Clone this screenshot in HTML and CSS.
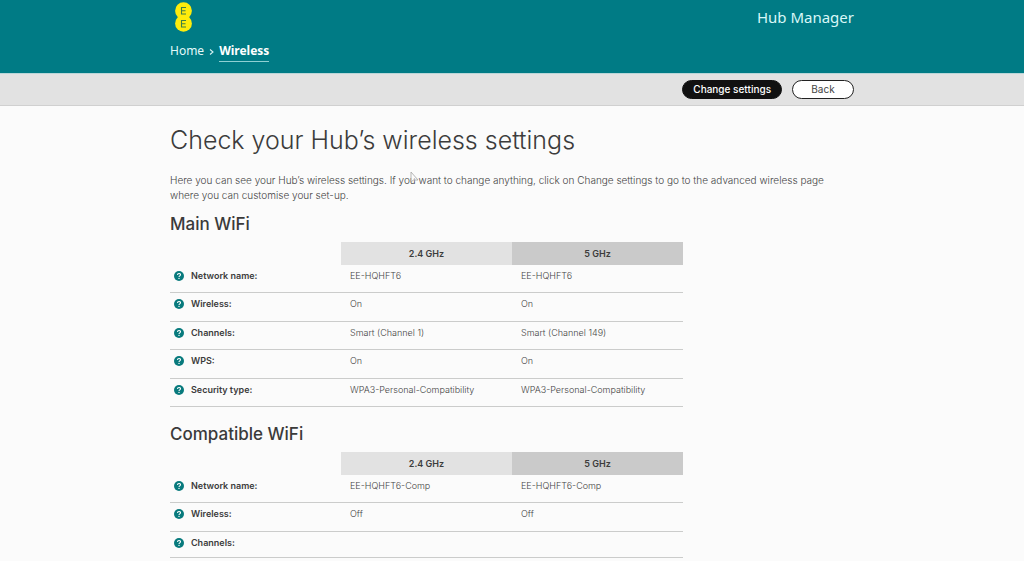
FILE: index.html
```html
<!DOCTYPE html>
<html lang="en">
<head>
<meta charset="utf-8">
<meta name="viewport" content="width=device-width, initial-scale=1">
<title>Hub Manager - Wireless</title>
<link rel="stylesheet" href="styles.css">
</head>
<body>
<svg class="defs" aria-hidden="true">
  <symbol id="help" viewBox="0 0 20 20">
    <circle cx="10" cy="10" r="10" fill="#087a7d"/>
    <path d="M7 7.8C7 4 13 4 13 7.6C13 9.8 10 9.6 10 12" fill="none" stroke="#fff" stroke-width="2.2"/>
    <circle cx="10" cy="14.8" r="1.4" fill="#fff"/>
  </symbol>
</svg>
<header class="masthead">
  <div class="container masthead-inner">
    <div class="brand">
      <a class="logo" href="#" aria-label="EE home">
        <svg viewBox="0 0 17 30" width="17" height="30">
          <circle cx="8.5" cy="8.7" r="8.4" fill="#fdec0c"/>
          <circle cx="8.5" cy="21.4" r="8.4" fill="#fdec0c"/>
          <path d="M11 5.5H6.5V12H11M6.5 8.7H10.5M11 18.5H6.5V25H11M6.5 21.7H10.5" fill="none" stroke="#3f7f45" stroke-width="1.1"/>
        </svg>
      </a>
      <nav class="crumbs" aria-label="Breadcrumb">
        <a href="#">Home</a>
        <svg class="chevron" viewBox="0 0 5 6" width="5" height="6"><path d="M1 .5L4 3L1 5.5" fill="none" stroke="#d6f2f2" stroke-width="1.1"/></svg>
        <a class="current" href="#" aria-current="page">Wireless</a>
      </nav>
    </div>
    <div class="product">Hub Manager</div>
  </div>
</header>
<div class="toolbar">
  <div class="container actions">
    <button class="btn btn-primary" type="button">Change settings</button>
    <button class="btn" type="button">Back</button>
  </div>
</div>
<main class="container content">
  <h1>Check your Hub’s wireless settings</h1>
  <p class="intro">Here you can see your Hub’s wireless settings. If you want to change anything, click on Change settings to go to the advanced wireless page where you can customise your set-up.</p>
  <svg class="pointer" viewBox="0 0 9 13" width="9" height="13" aria-hidden="true"><path d="M1 1V11L3.5 9L8 9Z" fill="#fbfbfb" fill-opacity=".5" stroke="#a5a5a5" stroke-width=".8"/></svg>

  <section>
    <h2>Main WiFi</h2>
    <table class="settings">
      <thead>
        <tr><td></td><th class="band" scope="col">2.4 GHz</th><th class="band band-5" scope="col">5 GHz</th></tr>
      </thead>
      <tbody>
        <tr><th scope="row"><svg class="help"><use href="#help"/></svg>Network name:</th><td>EE-HQHFT6</td><td>EE-HQHFT6</td></tr>
        <tr><th scope="row"><svg class="help"><use href="#help"/></svg>Wireless:</th><td>On</td><td>On</td></tr>
        <tr><th scope="row"><svg class="help"><use href="#help"/></svg>Channels:</th><td>Smart (Channel 1)</td><td>Smart (Channel 149)</td></tr>
        <tr><th scope="row"><svg class="help"><use href="#help"/></svg>WPS:</th><td>On</td><td>On</td></tr>
        <tr><th scope="row"><svg class="help"><use href="#help"/></svg>Security type:</th><td>WPA3-Personal-Compatibility</td><td>WPA3-Personal-Compatibility</td></tr>
      </tbody>
    </table>
  </section>

  <section>
    <h2>Compatible WiFi</h2>
    <table class="settings">
      <thead>
        <tr><td></td><th class="band" scope="col">2.4 GHz</th><th class="band band-5" scope="col">5 GHz</th></tr>
      </thead>
      <tbody>
        <tr><th scope="row"><svg class="help"><use href="#help"/></svg>Network name:</th><td>EE-HQHFT6-Comp</td><td>EE-HQHFT6-Comp</td></tr>
        <tr><th scope="row"><svg class="help"><use href="#help"/></svg>Wireless:</th><td>Off</td><td>Off</td></tr>
        <tr class="empty"><th scope="row"><svg class="help"><use href="#help"/></svg>Channels:</th><td></td><td></td></tr>
      </tbody>
    </table>
  </section>
</main>
</body>
</html>
```
FILE: styles.css
```css
* { box-sizing: border-box; }

body {
  margin: 0;
  background: #fbfbfb;
  color: #444;
  font-family: Inter, Roboto, sans-serif;
  font-size: 10px;
  line-height: 15px;
}

.defs { display: none; }

.container {
  width: 66.8%;
  margin: 0 auto;
}

.masthead {
  background: #007b85;
  color: #d9f7f7;
}

.masthead-inner {
  display: flex;
  justify-content: space-between;
  padding: 2px 0 11px;
}

.logo {
  display: block;
  width: 17px;
  height: 30px;
  margin-left: 5px;
}

.crumbs {
  display: flex;
  align-items: center;
  gap: 5px;
  margin-top: 9px;
  font-family: "Noto Sans", sans-serif;
  font-size: 12px;
  line-height: 20px;
}

.crumbs a {
  color: #e4fafa;
  text-decoration: none;
  border-bottom: 1px solid transparent;
}

.crumbs .current {
  color: #fff;
  font-weight: 700;
  border-color: #8fd0d3;
}

.product {
  padding-top: 5px;
  font-family: "Noto Sans", sans-serif;
  font-size: 15px;
  line-height: 20px;
}

.toolbar {
  background: #e2e2e2;
  border-bottom: 1px solid #d0d0d0;
  border-top: 1px solid #b9d6d8;
}

.actions {
  display: flex;
  justify-content: flex-end;
  gap: 10px;
  padding: 6px 0;
}

.btn {
  min-width: 62px;
  height: 19px;
  padding: 0 10px;
  border: 1px solid #222;
  border-radius: 10px;
  background: #fff;
  color: #444;
  font-family: Inter, sans-serif;
  font-size: 10px;
  line-height: 15px;
}

.btn-primary {
  min-width: 99px;
  background: #111;
  border-color: #111;
  color: #fff;
  font-weight: 500;
}

.content { position: relative; }

h1 {
  margin: 0;
  padding-top: 18px;
  color: #3c3c3c;
  font-size: 25px;
  font-weight: 300;
  line-height: 32px;
}

.intro {
  margin: 17px 0 0;
  font-weight: 300;
}

.pointer {
  position: absolute;
  left: 240px;
  top: 65px;
}

h2 {
  margin: 0;
  padding: 9px 0 6px;
  color: #3a3a3a;
  font-size: 17px;
  font-weight: 500;
  line-height: 24px;
}

section + section h2 { padding-top: 15px; }

.settings {
  width: 75%;
  border-collapse: separate;
  border-spacing: 0;
  table-layout: fixed;
}

.settings td,
.settings th {
  height: 28px;
  padding: 3px 9px;
  border-bottom: 1px solid #cbcccb;
  font-size: 9px;
  line-height: 15px;
  text-align: left;
  vertical-align: top;
}

.settings td { font-weight: 300; }

.settings tbody tr:nth-child(even) > * { height: 29px; }
.settings tbody tr.empty > * { height: 26px; }

.settings th {
  color: #3c3c3c;
  font-weight: 600;
}

.settings tbody th { padding-left: 4px; }

.settings thead > tr > * {
  height: 23px;
  padding-top: 4px;
  border: 0;
}

.settings .band {
  background: #e2e2e2;
  text-align: center;
}

.settings .band-5 { background: #cacaca; }

.help {
  width: 10px;
  height: 10px;
  margin-right: 7px;
  vertical-align: -2px;
}
```
